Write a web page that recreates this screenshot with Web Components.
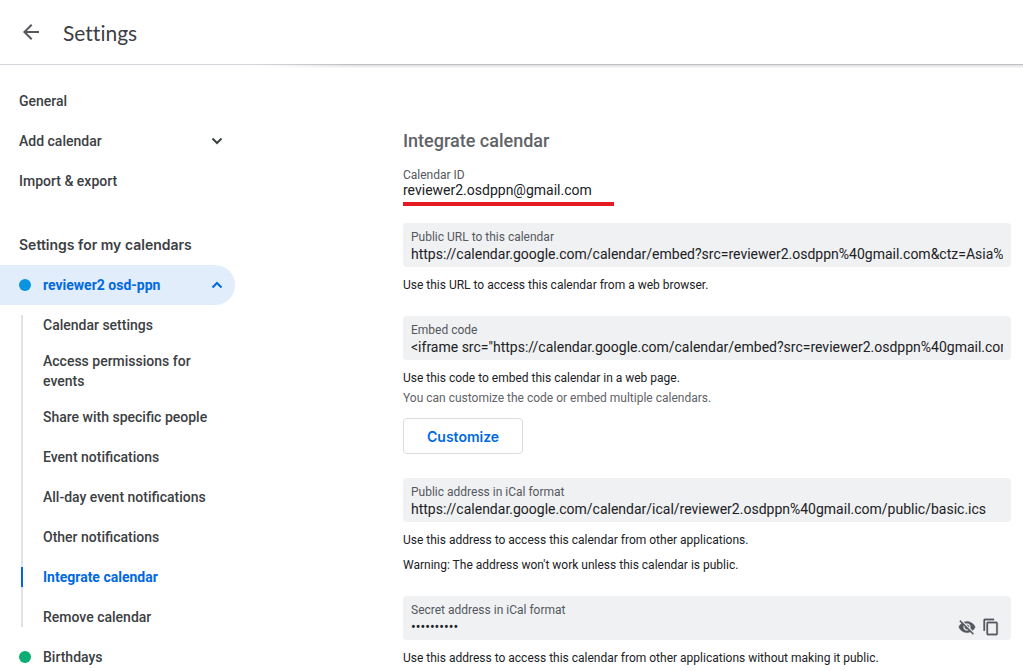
<!DOCTYPE html>
<html lang="en">
<head>
<meta charset="utf-8">
<meta name="viewport" content="width=device-width, initial-scale=1">
<title>Settings</title>
<style>
  :root {
    --text: #3c4043;
    --strong: #202124;
    --muted: #5f6368;
    --blue: #0069e0;
    --line: #dadce0;
    --field: #f0f1f3;
  }
  body { margin: 0; background: #fff; color: var(--text); font: 500 14px/20px Roboto, "Liberation Sans", sans-serif; }
</style>
</head>
<body>
<settings-app></settings-app>
<script>
const define = (name, html, setup) => {
  const template = document.createElement('template');
  template.innerHTML = html;
  customElements.define(name, class extends HTMLElement {
    connectedCallback() {
      if (this.shadowRoot) return;
      const root = this.attachShadow({ mode: 'open' });
      root.append(template.content.cloneNode(true));
      if (setup) setup(this, root);
    }
  });
};

define('settings-header', `
  <style>
    :host { display: flex; align-items: center; gap: 20px; height: 64px; padding: 0 19px; border-bottom: 1px solid #d3d6db; position: relative; }
    :host::after { content: ""; position: absolute; left: 251px; right: 0; top: 64px; height: 4px; background: linear-gradient(rgba(60,64,67,.14), rgba(60,64,67,.14) 50%, rgba(60,64,67,0)); -webkit-mask-image: linear-gradient(90deg, transparent, #000 100px); mask-image: linear-gradient(90deg, transparent, #000 100px); }
    button { display: flex; border: 0; padding: 0; background: none; color: #54575c; }
    h1 { margin: 0; color: var(--text); font: 400 21px/30px Lato, sans-serif; font-variant-ligatures: none; padding-top: 2px; }
  </style>
  <button aria-label="Back"><svg width="24" height="24" viewBox="0 0 24 24" fill="currentColor"><path d="M20 11H7.83l5.59-5.59L12 4l-8 8 8 8 1.41-1.41L7.83 13H20v-2z"/></svg></button>
  <h1><slot></slot></h1>
`);

define('nav-link', `
  <style>
    :host { display: block; }
    a { display: flex; align-items: center; gap: 12px; padding: 10px 12px 10px 19px; color: inherit; text-decoration: none; }
    span { flex: 1; }
    i { display: none; width: 12px; height: 12px; border-radius: 50%; background: var(--dot); }
    svg { display: none; }
    :host([dot]) i { display: block; }
    :host([chevron]) svg { display: block; }
    :host([chevron="up"]) svg { transform: rotate(180deg); }
    :host([selected]) { background: #e2edfb; color: var(--blue); font-weight: 700; border-radius: 0 20px 20px 0; }
  </style>
  <a href="#"><i></i><span><slot></slot></span><svg width="12" height="12" viewBox="0 0 12 12" fill="none" stroke="currentColor" stroke-width="2"><path d="M1.5 3.5 6 8l4.500-4.500"/></svg></a>
`);

define('sub-link', `
  <style>
    :host { display: block; padding: 10px 0; }
    a { display: block; padding: 0 24px 0 20px; border-left: 2px solid transparent; color: inherit; text-decoration: none; }
    :host([tall]) { padding: 6px 0; }
    :host([current]) a { border-color: var(--blue); color: var(--blue); font-weight: 700; }
  </style>
  <a href="#"><slot></slot></a>
`);

define('sub-nav', `
  <style>
    :host { display: block; margin-left: 21px; background: linear-gradient(#dfe3e8, #dfe3e8) 0 50% / 2px calc(100% - 20px) no-repeat; }
  </style>
  <slot></slot>
`);

define('settings-nav', `
  <style>
    :host { display: block; padding: 16px 16px 16px 0; }
    h2 { margin: 24px 0 0; padding: 10px 19px; font: 600 14px/20px Inter, sans-serif; color: var(--text); }
  </style>
  <nav aria-label="Settings">
    <nav-link>General</nav-link>
    <nav-link chevron="down">Add calendar</nav-link>
    <nav-link>Import &amp; export</nav-link>
    <h2>Settings for my calendars</h2>
    <nav-link dot selected chevron="up" style="--dot:#0a94e0">reviewer2 osd-ppn</nav-link>
    <sub-nav>
      <sub-link>Calendar settings</sub-link>
      <sub-link tall>Access permissions for events</sub-link>
      <sub-link>Share with specific people</sub-link>
      <sub-link>Event notifications</sub-link>
      <sub-link>All-day event notifications</sub-link>
      <sub-link>Other notifications</sub-link>
      <sub-link current>Integrate calendar</sub-link>
      <sub-link>Remove calendar</sub-link>
    </sub-nav>
    <nav-link dot style="--dot:#0bae72">Birthdays</nav-link>
  </nav>
`);

define('read-field', `
  <style>
    :host { display: block; }
    .box { display: flex; align-items: flex-end; box-sizing: border-box; height: 44px; padding: 4px 8px; background: var(--field); border-radius: 4px; }
    .text { flex: 1; min-width: 0; }
    label { display: block; color: #54585d; font-size: 12px; font-weight: 400; line-height: 16px; }
    input { display: block; width: 100%; height: 18px; padding: 0; border: 0; outline: 0; background: none; color: var(--strong); font: 400 14px/18px Roboto, sans-serif; }
    :host([plain]) .box { height: auto; padding: 0; background: none; border-radius: 0; }
    :host([plain]) label { line-height: 14px; }
    :host([plain]) input { height: 16px; line-height: 16px; }
  </style>
  <div class="box"><div class="text"><label for="value"></label><input id="value" readonly></div><slot></slot></div>
`, (host, root) => {
  root.querySelector('label').textContent = host.getAttribute('label');
  const input = root.querySelector('input');
  input.type = host.hasAttribute('secret') ? 'password' : 'text';
  input.value = host.getAttribute('value');
});

define('icon-button', `
  <style>
    :host { display: block; }
    button { display: flex; border: 0; padding: 0 2px; background: none; color: #55595e; }
  </style>
  <button><slot></slot></button>
`, (host, root) => root.querySelector('button').setAttribute('aria-label', host.getAttribute('label')));

define('outline-button', `
  <style>
    :host { display: block; }
    button { height: 36px; padding: 1px 23px 0; border: 1px solid var(--line); border-radius: 4px; background: #fff; color: var(--blue); font: 600 14px/20px Inter, sans-serif; }
  </style>
  <button><slot></slot></button>
`);

define('integrate-panel', `
  <style>
    :host { display: block; padding: 64px 12px 16px 147px; font-size: 12px; line-height: 20px; color: var(--strong); }
    h2 { margin: 0 0 15px; color: var(--muted); font: 500 18px/24px Roboto, sans-serif; }
    section { margin-bottom: 21px; }
    .id { margin-bottom: 17px; }
    .embed { margin-bottom: 24px; }
    p { margin: 8px 0 0; font-weight: 400; }
    .note { margin: 0; color: var(--muted); }
    .gap { margin-top: 5px; }
    .mark { width: 211px; height: 4px; margin-top: 4px; background: #e41b20; }
    outline-button { margin-top: 10px; }
  </style>
  <h2>Integrate calendar</h2>
  <section class="id">
    <read-field plain label="Calendar ID" value="reviewer2.osdppn@gmail.com"></read-field>
    <div class="mark"></div>
  </section>
  <section>
    <read-field label="Public URL to this calendar" value="https://calendar.google.com/calendar/embed?src=reviewer2.osdppn%40gmail.com&amp;ctz=Asia%2FTokyo"></read-field>
    <p>Use this URL to access this calendar from a web browser.</p>
  </section>
  <section class="embed">
    <read-field label="Embed code" value="&lt;iframe src=&quot;https://calendar.google.com/calendar/embed?src=reviewer2.osdppn%40gmail.com&quot;&gt;&lt;/iframe&gt;"></read-field>
    <p>Use this code to embed this calendar in a web page.</p>
    <p class="note">You can customize the code or embed multiple calendars.</p>
    <outline-button>Customize</outline-button>
  </section>
  <section>
    <read-field label="Public address in iCal format" value="https://calendar.google.com/calendar/ical/reviewer2.osdppn%40gmail.com/public/basic.ics"></read-field>
    <p>Use this address to access this calendar from other applications.</p>
    <p class="gap">Warning: The address won't work unless this calendar is public.</p>
  </section>
  <section>
    <read-field secret label="Secret address in iCal format" value="0123456789">
      <icon-button label="Show address"><svg width="20" height="18" viewBox="0 0 24 24" fill="currentColor" stroke="currentColor" stroke-width=".4"><path d="M12 7c2.760 0 5 2.240 5 5 0 .65-.13 1.260-.36 1.830l2.920 2.920c1.510-1.260 2.700-2.890 3.430-4.750-1.730-4.390-6-7.500-11-7.500-1.400 0-2.740.25-3.980.7l2.160 2.160C10.740 7.130 11.350 7 12 7zM2 4.270l2.280 2.280.46.46C3.080 8.300 1.780 10.020 1 12c1.730 4.390 6 7.500 11 7.500 1.550 0 3.030-.3 4.380-.84l.42.42L19.730 22 21 20.730 3.270 3 2 4.270zM7.530 9.800l1.550 1.550c-.05.21-.08.43-.08.65 0 1.660 1.340 3 3 3 .22 0 .44-.03.65-.08l1.550 1.550c-.67.33-1.410.53-2.200.53-2.760 0-5-2.240-5-5 0-.79.2-1.530.53-2.200zm4.310-.78 3.150 3.150.02-.16c0-1.660-1.340-3-3-3l-.17.01z"/></svg></icon-button>
      <icon-button label="Copy address"><svg width="20" height="18" viewBox="0 0 24 24" fill="currentColor" stroke="currentColor" stroke-width=".4"><path d="M16 1H4c-1.100 0-2 .9-2 2v14h2V3h12V1zm3 4H8c-1.100 0-2 .9-2 2v14c0 1.100.9 2 2 2h11c1.100 0 2-.9 2-2V7c0-1.100-.9-2-2-2zm0 16H8V7h11v14z"/></svg></icon-button>
    </read-field>
    <p>Use this address to access this calendar from other applications without making it public.</p>
  </section>
`);

define('settings-app', `
  <style>
    :host { display: flex; flex-direction: column; height: 100vh; }
    settings-header { flex: none; }
    .panes { flex: 1; min-height: 0; display: grid; grid-template-columns: 251px minmax(0, 1fr); }
    settings-nav, main { overflow-y: auto; scrollbar-width: none; }
    main { min-width: 0; padding-left: 5px; }
  </style>
  <settings-header>Settings</settings-header>
  <div class="panes">
    <settings-nav></settings-nav>
    <main><integrate-panel></integrate-panel></main>
  </div>
`);
</script>
</body>
</html>
